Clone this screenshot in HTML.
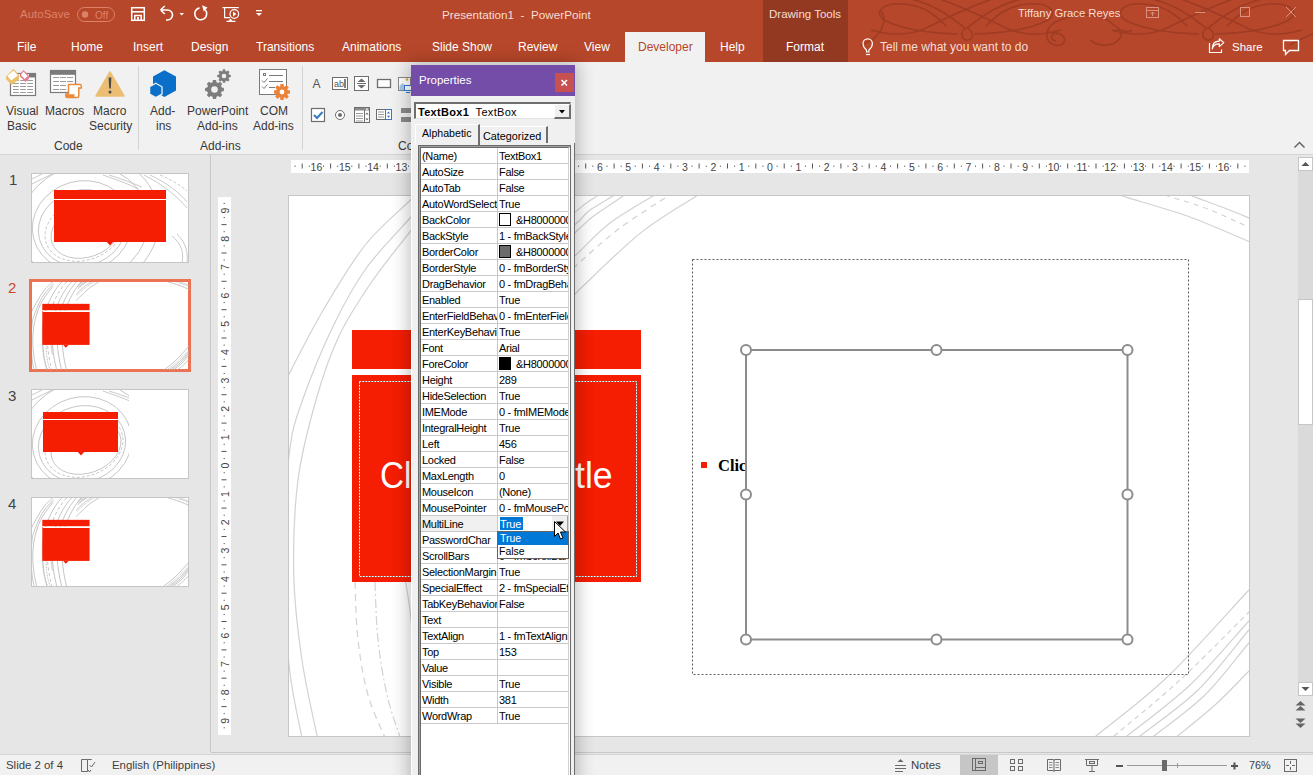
<!DOCTYPE html>
<html><head><meta charset="utf-8">
<style>
*{margin:0;padding:0;box-sizing:border-box}
html,body{width:1313px;height:775px;overflow:hidden;background:#E6E6E6;font-family:"Liberation Sans",sans-serif;position:relative}
.a{position:absolute}
.t{position:absolute;white-space:nowrap;line-height:1}
#top{left:0;top:0;width:1313px;height:62px;background:#B7472A}
#ctx{left:763px;top:0;width:85px;height:62px;background:#933922}
#devtab{left:625px;top:32px;width:80px;height:30px;background:#F1F1F1}
#ribbon{left:0;top:62px;width:1313px;height:93px;background:#F1F1F1;border-bottom:1px solid #D4D4D4}
.tab{font-size:12px;color:#FFFFFF;top:41px}
.rl{font-size:12px;color:#383838}
.sep{position:absolute;width:1px;background:#D4D4D4}
#status{left:0;top:755px;width:1313px;height:20px;background:#F1F1F1}
.st{font-size:11.4px;color:#404040;top:760px}


.pk{position:absolute;left:421px;width:76px;height:15px;overflow:hidden;font-size:11px;letter-spacing:-0.3px;color:#000;line-height:16.5px;white-space:nowrap;padding-left:1px}
.pv{position:absolute;left:498px;width:70px;height:15px;overflow:hidden;font-size:11px;letter-spacing:-0.3px;color:#000;line-height:16.5px;white-space:nowrap;padding-left:1px}
.sw{position:absolute;left:1px;top:1px;width:12px;height:13px;border:1px solid #000;display:block}
</style></head><body>
<!-- title + tabs -->
<div id="top" class="a"></div>
<div id="ctx" class="a"></div>
<div id="devtab" class="a"></div>

<!-- title bar icons -->
<svg class="a" style="left:0;top:0" width="1313" height="62">
 <g fill="none" stroke="#9E3C24" stroke-width="1.7">
  <g transform="translate(966 0)"><g id="mf">
   <path d="M1 28 C-7 30 -5 41 2 40 C8 39 8 31 1 28 C14 18 30 4 60 -2"/>
   <path d="M-1 28 C-14 18 -30 4 -60 -2"/>
   <path d="M8 34 C30 34 60 30 78 22 C95 14 85 2 62 4 C40 6 30 16 20 26"/>
   <path d="M-8 34 C-30 34 -60 30 -78 22 C-95 14 -85 2 -62 4 C-40 6 -30 16 -20 26"/>
   <path d="M-35 -4 C-10 4 20 18 40 28 C55 35 75 36 95 30"/>
   <path d="M35 -4 C10 4 -20 18 -40 28 C-55 35 -75 36 -95 30"/>
  </g></g>
  <g transform="translate(1207 0)"><g >
   <path d="M1 28 C-7 30 -5 41 2 40 C8 39 8 31 1 28 C14 18 30 4 60 -2"/>
   <path d="M-1 28 C-14 18 -30 4 -60 -2"/>
   <path d="M8 34 C30 34 60 30 78 22 C95 14 85 2 62 4 C40 6 30 16 20 26"/>
   <path d="M-8 34 C-30 34 -60 30 -78 22 C-95 14 -85 2 -62 4 C-40 6 -30 16 -20 26"/>
   <path d="M-35 -4 C-10 4 20 18 40 28 C55 35 75 36 95 30"/>
   <path d="M35 -4 C10 4 -20 18 -40 28 C-55 35 -75 36 -95 30"/>
  </g></g>
  <path d="M1060 20 C1045 25 1042 42 1055 45 C1065 47 1068 38 1060 34 C1052 30 1048 40 1056 41"/>
  <path d="M1060 20 C1080 12 1100 14 1110 22 C1118 28 1125 35 1132 30"/>
  <path d="M1090 40 C1100 48 1115 46 1120 38 C1123 32 1118 28 1114 32"/>
  <path d="M860 45 C880 40 890 20 880 10"/>
  <path d="M1290 45 C1300 38 1313 35 1320 30"/>
 </g>
 <!-- autosave toggle -->
 <rect x="77.5" y="7.5" width="37" height="14" rx="7" fill="none" stroke="#DE8169"/>
 <circle cx="85" cy="14.5" r="3.2" fill="#DE8169"/>
 <text x="95" y="19" font-family="Liberation Sans" font-size="10" fill="#DE8169">Off</text>
 <!-- save -->
 <g fill="none" stroke="#fff" stroke-width="1.5">
  <rect x="131.7" y="7.7" width="12.6" height="12.6"/>
  <path d="M134.8 20 V15.5 H141.2 V20"/>
 </g>
 <rect x="131" y="11" width="14" height="1.6" fill="#fff"/>
 <rect x="137" y="17" width="2" height="3" fill="#fff"/>
 <!-- undo -->
 <path d="M160.5 10 L164.8 6 M160.5 10 L164.8 14 M161 10 H167.5 a5 5 0 0 1 0 10 h-1.5" fill="none" stroke="#fff" stroke-width="1.6"/>
 <path d="M179.5 13 h4.5 l-2.25 2.6z" fill="#fff"/>
 <!-- repeat -->
 <path d="M205.2 9.8 A6 6 0 1 1 199.5 7.9" fill="none" stroke="#fff" stroke-width="1.6"/>
 <path d="M202 5.2 L207.5 7.4 L203.8 11.6z" fill="#fff"/>
 <!-- present -->
 <g fill="none" stroke="#fff" stroke-width="1.2">
  <line x1="222.5" y1="7.6" x2="238.8" y2="7.6"/>
  <path d="M224.6 8 V17.6 H230"/>
  <circle cx="234.3" cy="14" r="4.3"/>
  <path d="M226.5 21.4 h9 M229 21.4 l1.5 -2 l1.5 2"/>
 </g>
 <path d="M233 11.6 l3.4 2.4 l-3.4 2.4z" fill="#fff"/>
 <!-- customize -->
 <rect x="256" y="10" width="6" height="1.3" fill="#fff"/>
 <path d="M256 13 h6 l-3 3z" fill="#fff"/>
 <!-- window controls -->
 <g fill="none" stroke="#D9907D" stroke-width="1">
  <rect x="1146.5" y="7.5" width="12" height="10"/>
  <line x1="1147" y1="10.5" x2="1158" y2="10.5"/>
  <path d="M1152.5 16 v-4 M1150.5 14 l2 -2 l2 2"/>
  <line x1="1195" y1="12.5" x2="1205" y2="12.5"/>
  <rect x="1240.5" y="7.5" width="9" height="9"/>
  <path d="M1286 7 l10 10 M1296 7 l-10 10"/>
 </g>
 <!-- lightbulb -->
 <g fill="none" stroke="#fff" stroke-width="1.2">
  <path d="M866.5 52 v-2 q-3.5 -3 -3.5 -6.5 a4.7 4.7 0 0 1 9.4 0 q0 3.5 -3.5 6.5 v2z"/>
  <line x1="866" y1="54.5" x2="870" y2="54.5"/>
 </g>
 <!-- share -->
 <g fill="none" stroke="#fff" stroke-width="1.2">
  <path d="M1209.5 43 V52.5 H1221.5 V49.5"/>
  <path d="M1212.3 49 C1212.8 45 1215.5 43.8 1219.3 43.8 V46.6 L1223.8 42.6 L1219.3 38.8 V41.2 C1214.5 41.2 1212.3 44.5 1212.3 49z" stroke-linejoin="round"/>
 </g>
 <!-- comments -->
 <path d="M1283.5 40.5 h15 v10 h-9 l-4 4 v-4 h-2z" fill="none" stroke="#fff" stroke-width="1.3"/>
</svg>
<span class="t" style="left:20px;top:8.5px;font-size:11.5px;color:#DE8169">AutoSave</span>
<span class="t" style="left:442px;top:8.5px;font-size:11.7px;color:#F6DDD5">Presentation1 &nbsp;- &nbsp;PowerPoint</span>
<span class="t" style="left:769px;top:8.5px;font-size:11.5px;color:#F6DDD5">Drawing Tools</span>
<span class="t" style="left:1018px;top:7.5px;font-size:11.3px;color:#F6DDD5">Tiffany Grace Reyes</span>

<span class="t tab" style="left:17px">File</span>
<span class="t tab" style="left:71px">Home</span>
<span class="t tab" style="left:133px">Insert</span>
<span class="t tab" style="left:191px">Design</span>
<span class="t tab" style="left:256px">Transitions</span>
<span class="t tab" style="left:342px">Animations</span>
<span class="t tab" style="left:432px">Slide Show</span>
<span class="t tab" style="left:518px">Review</span>
<span class="t tab" style="left:584px">View</span>
<span class="t tab" style="left:638px;color:#B7472A">Developer</span>
<span class="t tab" style="left:720px">Help</span>
<span class="t tab" style="left:786px">Format</span>
<span class="t tab" style="left:880px;color:#F5DCD4">Tell me what you want to do</span>
<span class="t tab" style="left:1232px;font-size:11.5px;top:41.5px">Share</span>

<!-- ribbon -->
<div id="ribbon" class="a"></div>


<!-- ribbon content -->
<svg class="a" style="left:0;top:62px" width="420" height="92" viewBox="0 62 420 92">
 <!-- Visual Basic -->
 <rect x="10.5" y="73.5" width="25" height="22" fill="#fff" stroke="#7a7a7a" stroke-width="1.2"/>
 <rect x="29" y="73" width="7" height="4.5" fill="#7a7a7a"/>
 <g stroke="#9a9a9a" stroke-width="1"><line x1="13" y1="80.5" x2="18.8" y2="80.5"/><line x1="20.2" y1="80.5" x2="25.9" y2="80.5"/><line x1="27.2" y1="80.5" x2="33" y2="80.5"/><line x1="13" y1="83.5" x2="18.8" y2="83.5"/><line x1="20.2" y1="83.5" x2="25.9" y2="83.5"/><line x1="27.2" y1="83.5" x2="33" y2="83.5"/><line x1="13" y1="86.5" x2="18.8" y2="86.5"/><line x1="20.2" y1="86.5" x2="25.9" y2="86.5"/><line x1="27.2" y1="86.5" x2="33" y2="86.5"/><line x1="13" y1="89.5" x2="18.8" y2="89.5"/><line x1="20.2" y1="89.5" x2="25.9" y2="89.5"/><line x1="27.2" y1="89.5" x2="33" y2="89.5"/><line x1="13" y1="92.5" x2="18.8" y2="92.5"/><line x1="20.2" y1="92.5" x2="25.9" y2="92.5"/><line x1="27.2" y1="92.5" x2="33" y2="92.5"/></g>
 <polygon points="13.5,68.8 19,75 19,79.5 11.5,85 6,79 6,76.5" fill="#EBC06A"/>
 <polygon points="13.5,70.6 17.8,75.4 11.3,80.6 7.3,76" fill="#fff"/>
 <polygon points="23.5,70 28.8,75.5 28.8,79 25.5,82 20,76.5 20,74" fill="#E47A8E"/>
 <polygon points="23.4,71.6 27.7,76 24.6,79 20.9,75" fill="#fff"/>
 <!-- Macros -->
 <rect x="50.5" y="70.5" width="25" height="22" fill="#fff" stroke="#7a7a7a" stroke-width="1.2"/>
 <rect x="50" y="70" width="26" height="4.8" fill="#7a7a7a"/>
 <g stroke="#9a9a9a"><line x1="53" y1="77.5" x2="59" y2="77.5"/><line x1="60" y1="77.5" x2="66" y2="77.5"/><line x1="67" y1="77.5" x2="73" y2="77.5"/><line x1="53" y1="81.5" x2="59" y2="81.5"/><line x1="60" y1="81.5" x2="66" y2="81.5"/><line x1="67" y1="81.5" x2="73" y2="81.5"/><line x1="53" y1="85.5" x2="59" y2="85.5"/><line x1="60" y1="85.5" x2="66" y2="85.5"/><line x1="53" y1="89.5" x2="59" y2="89.5"/><line x1="60" y1="89.5" x2="66" y2="89.5"/></g>
 <path d="M68.5 84.5 h11.5 q1.3 0 1.3 1.5 v2 h-2.5 v8 q0 1.6 -1.6 1.6 h-9.7 q-1.6 0 -1.6 -1.6 v-2 h2.6z" fill="#fff" stroke="#EA8A3A" stroke-width="1.5"/>
 <path d="M65.5 94.3 h9 v3.3 h-7.5 q-1.5 0 -1.5 -1.6z" fill="#EA8A3A"/>
 <!-- Macro Security -->
 <path d="M110 72 L124 96 L96 96 Z" fill="#EBBE74" stroke="#EBBE74" stroke-linejoin="round" stroke-width="1.5"/>
 <path d="M108.6 77.5 h2.8 l-0.6 11 h-1.6z" fill="#4a4a4a"/>
 <circle cx="110" cy="92" r="1.5" fill="#4a4a4a"/>
 <!-- separator -->
 <line x1="138.5" y1="66" x2="138.5" y2="150" stroke="#D4D4D4"/>
 <!-- Add-ins -->
 <path d="M164.4 70.2 L176 76.5 L176 90.5 L164.4 97 L153 90.5 L153 76.5 Z" fill="#0A6FC8"/>
 <path d="M155.8 83.3 L162 86.8 L162 94 L155.8 97.5 L149.6 94 L149.6 86.8 Z" fill="#0A6FC8" stroke="#F1F1F1" stroke-width="1.3"/>
 <!-- PowerPoint Add-ins gears -->
 <g fill="#7D7D7D" transform="translate(214.5 89.5)"><circle r="7.6"/><rect x="-1.8" y="-9.4" width="3.6" height="18.8" transform="rotate(0)" rx="0.6"/><rect x="-1.8" y="-9.4" width="3.6" height="18.8" transform="rotate(45)" rx="0.6"/><rect x="-1.8" y="-9.4" width="3.6" height="18.8" transform="rotate(90)" rx="0.6"/><rect x="-1.8" y="-9.4" width="3.6" height="18.8" transform="rotate(135)" rx="0.6"/><circle r="3.3" fill="#F1F1F1"/></g>
 <g fill="#7D7D7D" transform="translate(224 76)"><circle r="5.2"/><rect x="-1.3" y="-6.8" width="2.6" height="13.6" transform="rotate(0)" rx="0.6"/><rect x="-1.3" y="-6.8" width="2.6" height="13.6" transform="rotate(45)" rx="0.6"/><rect x="-1.3" y="-6.8" width="2.6" height="13.6" transform="rotate(90)" rx="0.6"/><rect x="-1.3" y="-6.8" width="2.6" height="13.6" transform="rotate(135)" rx="0.6"/><circle r="2.3" fill="#F1F1F1"/></g>
 <!-- COM Add-ins -->
 <rect x="259.5" y="69.5" width="27" height="25" fill="#fff" stroke="#7a7a7a"/>
 <rect x="263.5" y="73.5" width="2" height="2" fill="none" stroke="#7a7a7a"/>
 <g stroke="#7a7a7a" fill="none" stroke-width="1">
  <line x1="269" y1="75.5" x2="283" y2="75.5"/><line x1="269" y1="81.5" x2="283" y2="81.5"/><line x1="269" y1="87.5" x2="275" y2="87.5"/>
  <path d="M262 80.5 l2 2 l3.5 -4"/><path d="M262 86.5 l2 2 l3.5 -4"/>
 </g>
 <g fill="#EC8236" transform="translate(282 92)"><circle r="6"/><rect x="-1.7" y="-8" width="3.4" height="16" transform="rotate(0)" rx="0.6"/><rect x="-1.7" y="-8" width="3.4" height="16" transform="rotate(45)" rx="0.6"/><rect x="-1.7" y="-8" width="3.4" height="16" transform="rotate(90)" rx="0.6"/><rect x="-1.7" y="-8" width="3.4" height="16" transform="rotate(135)" rx="0.6"/><circle r="2.4" fill="#fff"/></g>
 <line x1="302.5" y1="66" x2="302.5" y2="150" stroke="#D4D4D4"/>
 <!-- Controls row 1 -->
 <text x="312.5" y="88" font-family="Liberation Sans" font-size="12" fill="#555">A</text>
 <rect x="332.5" y="77.5" width="15" height="12" fill="#fff" stroke="#6d6d6d"/>
 <text x="334" y="87" font-family="Liberation Sans" font-size="9" fill="#555">ab</text>
 <line x1="345" y1="79" x2="345" y2="88" stroke="#000"/>
 <rect x="354.5" y="76.5" width="14" height="14" fill="#fff" stroke="#6d6d6d"/>
 <path d="M361.5 78.5 l4 3.5 h-8z M361.5 88.5 l4 -3.5 h-8z" fill="#6d6d6d"/>
 <line x1="357" y1="83.5" x2="366" y2="83.5" stroke="#6d6d6d"/>
 <rect x="377.5" y="79.5" width="13" height="8" fill="#fff" stroke="#6d6d6d" stroke-width="1.3"/>
 <rect x="398.5" y="77.5" width="12" height="13" fill="#fff" stroke="#8a8a8a"/>
 <circle cx="407" cy="79.5" r="1.3" fill="#E9A54F"/>
 <path d="M399.5 90 v-4 l3 -3 l3 3 v4z" fill="#A9C6E8"/>
 <rect x="404.5" y="85.5" width="7" height="5" fill="#fff" stroke="#2D7BD0"/>
 <path d="M406 92.5 h4" stroke="#2D7BD0"/>
 <!-- Controls row 2 -->
 <rect x="311.5" y="108.5" width="13" height="13" fill="#fff" stroke="#6d6d6d" stroke-width="1.2"/>
 <path d="M314 115 l3 3 l5.5 -6" fill="none" stroke="#3A78C2" stroke-width="2"/>
 <circle cx="340" cy="115" r="4.5" fill="#fff" stroke="#6d6d6d"/>
 <circle cx="340" cy="115" r="2" fill="#6d6d6d"/>
 <rect x="354.5" y="107.5" width="15" height="15" fill="#fff" stroke="#6d6d6d"/>
 <line x1="364.5" y1="108" x2="364.5" y2="122" stroke="#6d6d6d"/>
 <rect x="355" y="108" width="14" height="2.5" fill="#8a8a8a"/>
 <path d="M365.5 108.5 h3 l-1.5 1.8z" fill="#fff"/>
 <path d="M365.3 114.5 l1.7 -2 l1.7 2z M365.3 118.5 l1.7 2 l1.7 -2z" fill="#6d6d6d"/>
 <g stroke="#9a9a9a"><line x1="356" y1="113.5" x2="363" y2="113.5"/><line x1="356" y1="116" x2="363" y2="116"/><line x1="356" y1="118.5" x2="363" y2="118.5"/><line x1="356" y1="121" x2="363" y2="121"/></g>
 <rect x="376.5" y="109.5" width="15" height="10" fill="#fff" stroke="#6d6d6d"/>
 <g stroke="#9a9a9a"><line x1="378" y1="112" x2="384" y2="112"/><line x1="378" y1="114.5" x2="384" y2="114.5"/><line x1="378" y1="117" x2="384" y2="117"/></g>
 <rect x="385.5" y="109.5" width="6" height="10" fill="#fff" stroke="#3A78C2"/>
 <path d="M386.8 113.5 l1.7 -2 l1.7 2z M386.8 115.8 l1.7 2 l1.7 -2z" fill="#3A78C2"/>
 <rect x="401" y="108" width="10" height="5" fill="#8a8a8a"/>
 <rect x="401" y="117" width="10" height="5" fill="#8a8a8a"/>
</svg>
<span class="t rl" style="left:6px;top:105px">Visual</span>
<span class="t rl" style="left:7px;top:120px">Basic</span>
<span class="t rl" style="left:45px;top:105px">Macros</span>
<span class="t rl" style="left:93px;top:105px">Macro</span>
<span class="t rl" style="left:89px;top:120px">Security</span>
<span class="t rl" style="left:54px;top:140px">Code</span>
<span class="t rl" style="left:150px;top:105px">Add-</span>
<span class="t rl" style="left:156px;top:120px">ins</span>
<span class="t rl" style="left:187px;top:105px">PowerPoint</span>
<span class="t rl" style="left:197px;top:120px">Add-ins</span>
<span class="t rl" style="left:260px;top:105px">COM</span>
<span class="t rl" style="left:253px;top:120px">Add-ins</span>
<span class="t rl" style="left:200px;top:140px">Add-ins</span>
<span class="t rl" style="left:398px;top:140px">Co</span>


<!-- main area -->
<div class="a" style="left:210px;top:155px;width:1px;height:597px;background:#C8C8C8"></div>
<div class="a" style="left:211px;top:752px;width:1102px;height:1px;background:#C8C8C8"></div>
<div class="a" style="left:0;top:754px;width:1313px;height:1px;background:#D4D4D4"></div>
<svg class="a" style="left:291px;top:160px" width="958" height="13">
<rect width="958" height="13" fill="#fff"/>
<text x="25.4" y="10.5" text-anchor="middle" font-family="Liberation Sans" font-size="10.5" fill="#444">16</text>
<text x="53.8" y="10.5" text-anchor="middle" font-family="Liberation Sans" font-size="10.5" fill="#444">15</text>
<text x="82.1" y="10.5" text-anchor="middle" font-family="Liberation Sans" font-size="10.5" fill="#444">14</text>
<text x="110.4" y="10.5" text-anchor="middle" font-family="Liberation Sans" font-size="10.5" fill="#444">13</text>
<text x="138.8" y="10.5" text-anchor="middle" font-family="Liberation Sans" font-size="10.5" fill="#444">12</text>
<text x="167.1" y="10.5" text-anchor="middle" font-family="Liberation Sans" font-size="10.5" fill="#444">11</text>
<text x="195.5" y="10.5" text-anchor="middle" font-family="Liberation Sans" font-size="10.5" fill="#444">10</text>
<text x="223.8" y="10.5" text-anchor="middle" font-family="Liberation Sans" font-size="10.5" fill="#444">9</text>
<text x="252.2" y="10.5" text-anchor="middle" font-family="Liberation Sans" font-size="10.5" fill="#444">8</text>
<text x="280.5" y="10.5" text-anchor="middle" font-family="Liberation Sans" font-size="10.5" fill="#444">7</text>
<text x="308.9" y="10.5" text-anchor="middle" font-family="Liberation Sans" font-size="10.5" fill="#444">6</text>
<text x="337.2" y="10.5" text-anchor="middle" font-family="Liberation Sans" font-size="10.5" fill="#444">5</text>
<text x="365.6" y="10.5" text-anchor="middle" font-family="Liberation Sans" font-size="10.5" fill="#444">4</text>
<text x="393.9" y="10.5" text-anchor="middle" font-family="Liberation Sans" font-size="10.5" fill="#444">3</text>
<text x="422.3" y="10.5" text-anchor="middle" font-family="Liberation Sans" font-size="10.5" fill="#444">2</text>
<text x="450.6" y="10.5" text-anchor="middle" font-family="Liberation Sans" font-size="10.5" fill="#444">1</text>
<text x="479.0" y="10.5" text-anchor="middle" font-family="Liberation Sans" font-size="10.5" fill="#444">0</text>
<text x="507.4" y="10.5" text-anchor="middle" font-family="Liberation Sans" font-size="10.5" fill="#444">1</text>
<text x="535.7" y="10.5" text-anchor="middle" font-family="Liberation Sans" font-size="10.5" fill="#444">2</text>
<text x="564.0" y="10.5" text-anchor="middle" font-family="Liberation Sans" font-size="10.5" fill="#444">3</text>
<text x="592.4" y="10.5" text-anchor="middle" font-family="Liberation Sans" font-size="10.5" fill="#444">4</text>
<text x="620.8" y="10.5" text-anchor="middle" font-family="Liberation Sans" font-size="10.5" fill="#444">5</text>
<text x="649.1" y="10.5" text-anchor="middle" font-family="Liberation Sans" font-size="10.5" fill="#444">6</text>
<text x="677.5" y="10.5" text-anchor="middle" font-family="Liberation Sans" font-size="10.5" fill="#444">7</text>
<text x="705.8" y="10.5" text-anchor="middle" font-family="Liberation Sans" font-size="10.5" fill="#444">8</text>
<text x="734.1" y="10.5" text-anchor="middle" font-family="Liberation Sans" font-size="10.5" fill="#444">9</text>
<text x="762.5" y="10.5" text-anchor="middle" font-family="Liberation Sans" font-size="10.5" fill="#444">10</text>
<text x="790.9" y="10.5" text-anchor="middle" font-family="Liberation Sans" font-size="10.5" fill="#444">11</text>
<text x="819.2" y="10.5" text-anchor="middle" font-family="Liberation Sans" font-size="10.5" fill="#444">12</text>
<text x="847.5" y="10.5" text-anchor="middle" font-family="Liberation Sans" font-size="10.5" fill="#444">13</text>
<text x="875.9" y="10.5" text-anchor="middle" font-family="Liberation Sans" font-size="10.5" fill="#444">14</text>
<text x="904.2" y="10.5" text-anchor="middle" font-family="Liberation Sans" font-size="10.5" fill="#444">15</text>
<text x="932.6" y="10.5" text-anchor="middle" font-family="Liberation Sans" font-size="10.5" fill="#444">16</text>
<rect x="3.6" y="5.5" width="1" height="1.5" fill="#777"/>
<rect x="10.7" y="3.5" width="1" height="5" fill="#555"/>
<rect x="17.8" y="5.5" width="1" height="1.5" fill="#777"/>
<rect x="32.0" y="5.5" width="1" height="1.5" fill="#777"/>
<rect x="39.1" y="3.5" width="1" height="5" fill="#555"/>
<rect x="46.2" y="5.5" width="1" height="1.5" fill="#777"/>
<rect x="60.3" y="5.5" width="1" height="1.5" fill="#777"/>
<rect x="67.4" y="3.5" width="1" height="5" fill="#555"/>
<rect x="74.5" y="5.5" width="1" height="1.5" fill="#777"/>
<rect x="88.7" y="5.5" width="1" height="1.5" fill="#777"/>
<rect x="95.8" y="3.5" width="1" height="5" fill="#555"/>
<rect x="102.9" y="5.5" width="1" height="1.5" fill="#777"/>
<rect x="117.0" y="5.5" width="1" height="1.5" fill="#777"/>
<rect x="124.1" y="3.5" width="1" height="5" fill="#555"/>
<rect x="131.2" y="5.5" width="1" height="1.5" fill="#777"/>
<rect x="145.4" y="5.5" width="1" height="1.5" fill="#777"/>
<rect x="152.5" y="3.5" width="1" height="5" fill="#555"/>
<rect x="159.6" y="5.5" width="1" height="1.5" fill="#777"/>
<rect x="173.7" y="5.5" width="1" height="1.5" fill="#777"/>
<rect x="180.8" y="3.5" width="1" height="5" fill="#555"/>
<rect x="187.9" y="5.5" width="1" height="1.5" fill="#777"/>
<rect x="202.1" y="5.5" width="1" height="1.5" fill="#777"/>
<rect x="209.2" y="3.5" width="1" height="5" fill="#555"/>
<rect x="216.3" y="5.5" width="1" height="1.5" fill="#777"/>
<rect x="230.4" y="5.5" width="1" height="1.5" fill="#777"/>
<rect x="237.5" y="3.5" width="1" height="5" fill="#555"/>
<rect x="244.6" y="5.5" width="1" height="1.5" fill="#777"/>
<rect x="258.8" y="5.5" width="1" height="1.5" fill="#777"/>
<rect x="265.9" y="3.5" width="1" height="5" fill="#555"/>
<rect x="273.0" y="5.5" width="1" height="1.5" fill="#777"/>
<rect x="287.1" y="5.5" width="1" height="1.5" fill="#777"/>
<rect x="294.2" y="3.5" width="1" height="5" fill="#555"/>
<rect x="301.3" y="5.5" width="1" height="1.5" fill="#777"/>
<rect x="315.5" y="5.5" width="1" height="1.5" fill="#777"/>
<rect x="322.6" y="3.5" width="1" height="5" fill="#555"/>
<rect x="329.7" y="5.5" width="1" height="1.5" fill="#777"/>
<rect x="343.8" y="5.5" width="1" height="1.5" fill="#777"/>
<rect x="350.9" y="3.5" width="1" height="5" fill="#555"/>
<rect x="358.0" y="5.5" width="1" height="1.5" fill="#777"/>
<rect x="372.2" y="5.5" width="1" height="1.5" fill="#777"/>
<rect x="379.3" y="3.5" width="1" height="5" fill="#555"/>
<rect x="386.4" y="5.5" width="1" height="1.5" fill="#777"/>
<rect x="400.5" y="5.5" width="1" height="1.5" fill="#777"/>
<rect x="407.6" y="3.5" width="1" height="5" fill="#555"/>
<rect x="414.7" y="5.5" width="1" height="1.5" fill="#777"/>
<rect x="428.9" y="5.5" width="1" height="1.5" fill="#777"/>
<rect x="436.0" y="3.5" width="1" height="5" fill="#555"/>
<rect x="443.1" y="5.5" width="1" height="1.5" fill="#777"/>
<rect x="457.2" y="5.5" width="1" height="1.5" fill="#777"/>
<rect x="464.3" y="3.5" width="1" height="5" fill="#555"/>
<rect x="471.4" y="5.5" width="1" height="1.5" fill="#777"/>
<rect x="485.6" y="5.5" width="1" height="1.5" fill="#777"/>
<rect x="492.7" y="3.5" width="1" height="5" fill="#555"/>
<rect x="499.8" y="5.5" width="1" height="1.5" fill="#777"/>
<rect x="513.9" y="5.5" width="1" height="1.5" fill="#777"/>
<rect x="521.0" y="3.5" width="1" height="5" fill="#555"/>
<rect x="528.1" y="5.5" width="1" height="1.5" fill="#777"/>
<rect x="542.3" y="5.5" width="1" height="1.5" fill="#777"/>
<rect x="549.4" y="3.5" width="1" height="5" fill="#555"/>
<rect x="556.5" y="5.5" width="1" height="1.5" fill="#777"/>
<rect x="570.6" y="5.5" width="1" height="1.5" fill="#777"/>
<rect x="577.7" y="3.5" width="1" height="5" fill="#555"/>
<rect x="584.8" y="5.5" width="1" height="1.5" fill="#777"/>
<rect x="599.0" y="5.5" width="1" height="1.5" fill="#777"/>
<rect x="606.1" y="3.5" width="1" height="5" fill="#555"/>
<rect x="613.2" y="5.5" width="1" height="1.5" fill="#777"/>
<rect x="627.3" y="5.5" width="1" height="1.5" fill="#777"/>
<rect x="634.4" y="3.5" width="1" height="5" fill="#555"/>
<rect x="641.5" y="5.5" width="1" height="1.5" fill="#777"/>
<rect x="655.7" y="5.5" width="1" height="1.5" fill="#777"/>
<rect x="662.8" y="3.5" width="1" height="5" fill="#555"/>
<rect x="669.9" y="5.5" width="1" height="1.5" fill="#777"/>
<rect x="684.0" y="5.5" width="1" height="1.5" fill="#777"/>
<rect x="691.1" y="3.5" width="1" height="5" fill="#555"/>
<rect x="698.2" y="5.5" width="1" height="1.5" fill="#777"/>
<rect x="712.4" y="5.5" width="1" height="1.5" fill="#777"/>
<rect x="719.5" y="3.5" width="1" height="5" fill="#555"/>
<rect x="726.6" y="5.5" width="1" height="1.5" fill="#777"/>
<rect x="740.7" y="5.5" width="1" height="1.5" fill="#777"/>
<rect x="747.8" y="3.5" width="1" height="5" fill="#555"/>
<rect x="754.9" y="5.5" width="1" height="1.5" fill="#777"/>
<rect x="769.1" y="5.5" width="1" height="1.5" fill="#777"/>
<rect x="776.2" y="3.5" width="1" height="5" fill="#555"/>
<rect x="783.3" y="5.5" width="1" height="1.5" fill="#777"/>
<rect x="797.4" y="5.5" width="1" height="1.5" fill="#777"/>
<rect x="804.5" y="3.5" width="1" height="5" fill="#555"/>
<rect x="811.6" y="5.5" width="1" height="1.5" fill="#777"/>
<rect x="825.8" y="5.5" width="1" height="1.5" fill="#777"/>
<rect x="832.9" y="3.5" width="1" height="5" fill="#555"/>
<rect x="840.0" y="5.5" width="1" height="1.5" fill="#777"/>
<rect x="854.1" y="5.5" width="1" height="1.5" fill="#777"/>
<rect x="861.2" y="3.5" width="1" height="5" fill="#555"/>
<rect x="868.3" y="5.5" width="1" height="1.5" fill="#777"/>
<rect x="882.5" y="5.5" width="1" height="1.5" fill="#777"/>
<rect x="889.6" y="3.5" width="1" height="5" fill="#555"/>
<rect x="896.7" y="5.5" width="1" height="1.5" fill="#777"/>
<rect x="910.8" y="5.5" width="1" height="1.5" fill="#777"/>
<rect x="917.9" y="3.5" width="1" height="5" fill="#555"/>
<rect x="925.0" y="5.5" width="1" height="1.5" fill="#777"/>
<rect x="939.2" y="5.5" width="1" height="1.5" fill="#777"/>
<rect x="946.3" y="3.5" width="1" height="5" fill="#555"/>
<rect x="953.4" y="5.5" width="1" height="1.5" fill="#777"/>
</svg>
<svg class="a" style="left:218px;top:197px" width="13" height="538">
<rect width="13" height="538" fill="#fff"/>
<text transform="translate(10.5 13.5) rotate(-90)" text-anchor="middle" font-family="Liberation Sans" font-size="10.5" fill="#444">9</text>
<text transform="translate(10.5 41.8) rotate(-90)" text-anchor="middle" font-family="Liberation Sans" font-size="10.5" fill="#444">8</text>
<text transform="translate(10.5 70.2) rotate(-90)" text-anchor="middle" font-family="Liberation Sans" font-size="10.5" fill="#444">7</text>
<text transform="translate(10.5 98.5) rotate(-90)" text-anchor="middle" font-family="Liberation Sans" font-size="10.5" fill="#444">6</text>
<text transform="translate(10.5 126.9) rotate(-90)" text-anchor="middle" font-family="Liberation Sans" font-size="10.5" fill="#444">5</text>
<text transform="translate(10.5 155.2) rotate(-90)" text-anchor="middle" font-family="Liberation Sans" font-size="10.5" fill="#444">4</text>
<text transform="translate(10.5 183.6) rotate(-90)" text-anchor="middle" font-family="Liberation Sans" font-size="10.5" fill="#444">3</text>
<text transform="translate(10.5 211.9) rotate(-90)" text-anchor="middle" font-family="Liberation Sans" font-size="10.5" fill="#444">2</text>
<text transform="translate(10.5 240.3) rotate(-90)" text-anchor="middle" font-family="Liberation Sans" font-size="10.5" fill="#444">1</text>
<text transform="translate(10.5 268.6) rotate(-90)" text-anchor="middle" font-family="Liberation Sans" font-size="10.5" fill="#444">0</text>
<text transform="translate(10.5 297.0) rotate(-90)" text-anchor="middle" font-family="Liberation Sans" font-size="10.5" fill="#444">1</text>
<text transform="translate(10.5 325.3) rotate(-90)" text-anchor="middle" font-family="Liberation Sans" font-size="10.5" fill="#444">2</text>
<text transform="translate(10.5 353.7) rotate(-90)" text-anchor="middle" font-family="Liberation Sans" font-size="10.5" fill="#444">3</text>
<text transform="translate(10.5 382.0) rotate(-90)" text-anchor="middle" font-family="Liberation Sans" font-size="10.5" fill="#444">4</text>
<text transform="translate(10.5 410.4) rotate(-90)" text-anchor="middle" font-family="Liberation Sans" font-size="10.5" fill="#444">5</text>
<text transform="translate(10.5 438.7) rotate(-90)" text-anchor="middle" font-family="Liberation Sans" font-size="10.5" fill="#444">6</text>
<text transform="translate(10.5 467.1) rotate(-90)" text-anchor="middle" font-family="Liberation Sans" font-size="10.5" fill="#444">7</text>
<text transform="translate(10.5 495.4) rotate(-90)" text-anchor="middle" font-family="Liberation Sans" font-size="10.5" fill="#444">8</text>
<text transform="translate(10.5 523.8) rotate(-90)" text-anchor="middle" font-family="Liberation Sans" font-size="10.5" fill="#444">9</text>
<rect x="5.5" y="5.9" width="1.5" height="1" fill="#777"/>
<rect x="5.5" y="20.0" width="1.5" height="1" fill="#777"/>
<rect x="3.5" y="27.1" width="5" height="1" fill="#555"/>
<rect x="5.5" y="34.2" width="1.5" height="1" fill="#777"/>
<rect x="5.5" y="48.4" width="1.5" height="1" fill="#777"/>
<rect x="3.5" y="55.5" width="5" height="1" fill="#555"/>
<rect x="5.5" y="62.6" width="1.5" height="1" fill="#777"/>
<rect x="5.5" y="76.7" width="1.5" height="1" fill="#777"/>
<rect x="3.5" y="83.8" width="5" height="1" fill="#555"/>
<rect x="5.5" y="90.9" width="1.5" height="1" fill="#777"/>
<rect x="5.5" y="105.1" width="1.5" height="1" fill="#777"/>
<rect x="3.5" y="112.2" width="5" height="1" fill="#555"/>
<rect x="5.5" y="119.3" width="1.5" height="1" fill="#777"/>
<rect x="5.5" y="133.4" width="1.5" height="1" fill="#777"/>
<rect x="3.5" y="140.5" width="5" height="1" fill="#555"/>
<rect x="5.5" y="147.6" width="1.5" height="1" fill="#777"/>
<rect x="5.5" y="161.8" width="1.5" height="1" fill="#777"/>
<rect x="3.5" y="168.9" width="5" height="1" fill="#555"/>
<rect x="5.5" y="176.0" width="1.5" height="1" fill="#777"/>
<rect x="5.5" y="190.1" width="1.5" height="1" fill="#777"/>
<rect x="3.5" y="197.2" width="5" height="1" fill="#555"/>
<rect x="5.5" y="204.3" width="1.5" height="1" fill="#777"/>
<rect x="5.5" y="218.5" width="1.5" height="1" fill="#777"/>
<rect x="3.5" y="225.6" width="5" height="1" fill="#555"/>
<rect x="5.5" y="232.7" width="1.5" height="1" fill="#777"/>
<rect x="5.5" y="246.8" width="1.5" height="1" fill="#777"/>
<rect x="3.5" y="253.9" width="5" height="1" fill="#555"/>
<rect x="5.5" y="261.0" width="1.5" height="1" fill="#777"/>
<rect x="5.5" y="275.2" width="1.5" height="1" fill="#777"/>
<rect x="3.5" y="282.3" width="5" height="1" fill="#555"/>
<rect x="5.5" y="289.4" width="1.5" height="1" fill="#777"/>
<rect x="5.5" y="303.5" width="1.5" height="1" fill="#777"/>
<rect x="3.5" y="310.6" width="5" height="1" fill="#555"/>
<rect x="5.5" y="317.7" width="1.5" height="1" fill="#777"/>
<rect x="5.5" y="331.9" width="1.5" height="1" fill="#777"/>
<rect x="3.5" y="339.0" width="5" height="1" fill="#555"/>
<rect x="5.5" y="346.1" width="1.5" height="1" fill="#777"/>
<rect x="5.5" y="360.2" width="1.5" height="1" fill="#777"/>
<rect x="3.5" y="367.3" width="5" height="1" fill="#555"/>
<rect x="5.5" y="374.4" width="1.5" height="1" fill="#777"/>
<rect x="5.5" y="388.6" width="1.5" height="1" fill="#777"/>
<rect x="3.5" y="395.7" width="5" height="1" fill="#555"/>
<rect x="5.5" y="402.8" width="1.5" height="1" fill="#777"/>
<rect x="5.5" y="416.9" width="1.5" height="1" fill="#777"/>
<rect x="3.5" y="424.0" width="5" height="1" fill="#555"/>
<rect x="5.5" y="431.1" width="1.5" height="1" fill="#777"/>
<rect x="5.5" y="445.3" width="1.5" height="1" fill="#777"/>
<rect x="3.5" y="452.4" width="5" height="1" fill="#555"/>
<rect x="5.5" y="459.5" width="1.5" height="1" fill="#777"/>
<rect x="5.5" y="473.6" width="1.5" height="1" fill="#777"/>
<rect x="3.5" y="480.7" width="5" height="1" fill="#555"/>
<rect x="5.5" y="487.8" width="1.5" height="1" fill="#777"/>
<rect x="5.5" y="502.0" width="1.5" height="1" fill="#777"/>
<rect x="3.5" y="509.1" width="5" height="1" fill="#555"/>
<rect x="5.5" y="516.2" width="1.5" height="1" fill="#777"/>
<rect x="5.5" y="530.3" width="1.5" height="1" fill="#777"/>
</svg>
<!-- slide -->
<div class="a" id="slide" style="left:288px;top:195px;width:962px;height:542px;background:#fff;border:1px solid #C6C6C6;overflow:hidden"></div>
<!-- scrollbar -->
<div class="a" style="left:1298px;top:171px;width:15px;height:511px;background:#DADADA"></div>
<div class="a" style="left:1298px;top:157px;width:15px;height:14px;background:#fff;border:1px solid #C6C6C6"></div>
<svg class="a" style="left:1298px;top:157px" width="15" height="14"><path d="M3.5 9 L7.5 5 L11.5 9z" fill="#555"/></svg>
<div class="a" style="left:1298px;top:299px;width:15px;height:126px;background:#fff;border:1px solid #C6C6C6"></div>
<div class="a" style="left:1298px;top:682px;width:15px;height:14px;background:#fff;border:1px solid #C6C6C6"></div>
<svg class="a" style="left:1298px;top:682px" width="15" height="14"><path d="M3.5 5 L7.5 9 L11.5 5z" fill="#555"/></svg>
<svg class="a" style="left:1290px;top:698px" width="23" height="34">
 <path d="M5.5 7.5 L10.5 3 L15.5 7.5z M5.5 12.5 L10.5 8 L15.5 12.5z" fill="#666"/>
 <path d="M5.5 20.5 L10.5 25 L15.5 20.5z M5.5 25.5 L10.5 30 L15.5 25.5z" fill="#666"/>
</svg>
<svg class="a" style="left:1292px;top:140px" width="16" height="10"><path d="M2.5 7.5 L7.5 2.5 L12.5 7.5" fill="none" stroke="#666" stroke-width="1.5"/></svg>

<!-- slide content -->
<svg class="a" style="left:289px;top:196px" width="960" height="540" viewBox="289 196 960 540">
 <defs><clipPath id="sc"><rect x="289" y="196" width="960" height="540"/></clipPath></defs>
 <g clip-path="url(#sc)" fill="none" stroke="#D2D2D2" stroke-width="1.2">
  <!-- arcs -->
  <path d="M420.0 188.0 C418.5 189.9 420.0 190.2 411.0 199.5 C402.0 208.8 380.2 226.2 366.0 244.0 C351.8 261.8 338.2 284.8 325.6 306.0 C313.0 327.2 297.7 357.1 290.4 371.4 C283.1 385.7 283.4 388.6 282.0 392.0"/>
  <path d="M420.0 205.0 C418.5 207.0 420.0 206.4 411.0 217.0 C402.0 227.6 378.9 250.5 366.0 268.5 C353.1 286.5 344.3 303.1 333.7 325.0 C323.1 346.9 310.0 378.7 302.6 400.0 C295.2 421.3 292.7 425.9 289.4 452.6 C286.1 479.3 283.0 524.1 283.0 560.0 C283.0 595.9 286.1 637.7 289.4 667.7 C292.6 697.7 299.9 726.3 302.5 740.0 C305.1 753.7 304.6 748.3 305.0 750.0"/>
  <path d="M420.0 219.0 C418.5 220.9 419.1 220.1 411.0 230.6 C402.9 241.1 383.6 264.4 371.6 282.0 C359.6 299.6 348.3 316.3 339.0 336.0 C329.7 355.7 322.8 376.0 316.0 400.0 C309.2 424.0 301.7 450.8 298.0 480.0 C294.3 509.2 293.1 545.5 293.8 575.5 C294.5 605.5 298.0 632.6 302.0 660.0 C306.0 687.4 315.3 726.7 318.0 740.0"/>
  <path d="M355.0 582.0 C355.5 591.7 355.8 621.2 358.0 640.0 C360.2 658.8 363.3 678.3 368.0 695.0 C372.7 711.7 383.0 732.5 386.0 740.0" stroke-dasharray="7 5"/>
  <path d="M375.0 582.0 C375.5 591.7 376.0 621.2 378.0 640.0 C380.0 658.8 383.2 678.3 387.0 695.0 C390.8 711.7 398.7 732.5 401.0 740.0" stroke-dasharray="9 3 2 3"/>
  <path d="M405.7 582.0 C406.4 586.7 408.8 600.3 410.0 610.0 C411.2 619.7 412.5 635.0 413.0 640.0"/>
  <path d="M700.0 194.0 C699.4 194.3 706.3 189.6 696.5 196.0 C686.7 202.4 660.4 217.1 641.0 232.6 C621.6 248.1 593.5 276.1 580.0 289.0 C566.5 301.9 563.3 306.5 560.0 310.0"/>
  <path d="M672.0 194.0 C671.3 194.3 676.7 190.3 668.0 196.0 C659.3 201.7 634.7 217.0 620.0 228.0 C605.3 239.0 590.0 253.0 580.0 262.0 C570.0 271.0 563.3 278.7 560.0 282.0" stroke-dasharray="6 5"/>
  <path d="M657.0 194.0 C656.3 194.3 660.8 191.2 653.0 196.0 C645.2 200.8 622.2 213.8 610.0 223.0 C597.8 232.2 588.3 243.2 580.0 251.0 C571.7 258.8 563.3 266.8 560.0 270.0"/>
  <path d="M626.0 194.0 C625.5 194.3 628.2 192.5 623.0 196.0 C617.8 199.5 602.2 209.7 595.0 215.0 C587.8 220.3 584.2 224.2 580.0 228.0 C575.8 231.8 571.7 236.3 570.0 238.0"/>
  <path d="M616.0 194.0 C615.5 194.3 617.3 193.3 613.0 196.0 C608.7 198.7 595.5 206.0 590.0 210.0 C584.5 214.0 583.3 216.8 580.0 220.0 C576.7 223.2 571.7 227.5 570.0 229.0"/>
  <path d="M600.0 194.0 C599.5 194.3 599.5 194.3 597.0 196.0 C594.5 197.7 587.8 202.0 585.0 204.0 C582.2 206.0 582.5 206.0 580.0 208.0 C577.5 210.0 571.7 214.7 570.0 216.0"/>
  <path d="M1120.0 195.0 C1121.2 195.4 1115.6 193.8 1126.9 197.4 C1138.2 201.0 1167.9 209.0 1188.0 216.3 C1208.1 223.6 1236.4 236.2 1247.6 241.0 C1258.8 245.8 1253.8 244.3 1255.0 245.0"/>
  <path d="M1165.0 195.0 C1166.2 195.4 1165.2 195.1 1172.3 197.4 C1179.4 199.7 1195.2 204.1 1207.8 209.0 C1220.3 213.9 1239.7 223.1 1247.6 226.6 C1255.5 230.1 1253.8 229.4 1255.0 230.0" stroke-dasharray="5 5"/>
  <path d="M1190.0 195.0 C1191.0 195.4 1190.5 195.4 1195.8 197.4 C1201.1 199.4 1213.4 203.7 1222.0 207.0 C1230.6 210.3 1242.1 215.1 1247.6 217.4 C1253.1 219.7 1253.8 220.4 1255.0 221.0"/>
  <path d="M1255.0 584.0 C1253.8 585.2 1262.4 575.7 1248.0 591.0 C1233.6 606.3 1193.7 651.8 1168.4 676.0 C1143.1 700.2 1109.4 725.0 1096.0 736.0 C1082.6 747.0 1089.3 741.0 1088.0 742.0"/>
  <path d="M1255.0 606.0 C1253.8 607.2 1260.5 600.7 1248.0 613.0 C1235.5 625.3 1202.3 659.5 1180.0 680.0 C1157.7 700.5 1126.3 725.7 1114.0 736.0 C1101.7 746.3 1107.3 741.0 1106.0 742.0" stroke-dasharray="5 4"/>
  <path d="M1255.0 615.0 C1253.8 616.2 1258.8 610.3 1248.0 622.0 C1237.2 633.7 1210.2 666.0 1190.0 685.0 C1169.8 704.0 1138.8 726.5 1127.0 736.0 C1115.2 745.5 1120.3 741.0 1119.0 742.0"/>
  <path d="M1255.0 624.0 C1253.8 625.2 1257.5 620.0 1248.0 631.0 C1238.5 642.0 1216.0 672.5 1198.0 690.0 C1180.0 707.5 1151.0 727.3 1140.0 736.0 C1129.0 744.7 1133.3 741.0 1132.0 742.0"/>
  <path d="M1255.0 637.0 C1253.8 638.2 1256.3 634.3 1248.0 644.0 C1239.7 653.7 1220.7 679.7 1205.0 695.0 C1189.3 710.3 1163.8 728.2 1154.0 736.0 C1144.2 743.8 1147.3 741.0 1146.0 742.0"/>
  <path d="M1255.0 665.0 C1253.8 666.2 1254.7 665.3 1248.0 672.0 C1241.3 678.7 1226.8 694.3 1215.0 705.0 C1203.2 715.7 1185.0 729.8 1177.5 736.0 C1170.0 742.2 1171.2 741.0 1170.0 742.0"/>

 </g>
 <!-- title box -->
 <rect x="352" y="330" width="289" height="39" fill="#F51D02"/>
 <rect x="352" y="375" width="289" height="207" fill="#F51D02"/>
 <rect x="359.5" y="381.5" width="277" height="195" fill="none" stroke="#7A7A7A" stroke-width="1"/>
 <rect x="359.5" y="381.5" width="277" height="195" fill="none" stroke="#fff" stroke-width="1" stroke-dasharray="1.5 1.5"/>
 <!-- content placeholder -->
 <rect x="692.5" y="259.5" width="496" height="415" fill="none" stroke="#5A5A5A" stroke-width="1" stroke-dasharray="2 2"/>
 <rect x="701" y="462" width="6" height="6" fill="#F51D02"/>
</svg>
<span class="t" style="left:380.3px;top:458px;font-size:36px;color:#fff;transform:scaleX(0.925);transform-origin:0 0">Click to</span>
<span class="t" style="left:574.5px;top:458px;font-size:36px;color:#fff;transform:scaleX(0.99);transform-origin:0 0">tle</span>
<span class="t" style="left:718px;top:458px;font-size:16.5px;color:#000;font-family:'Liberation Serif',serif;font-weight:bold">Click to add text</span>
<!-- selected textbox -->
<svg class="a" style="left:735px;top:339px" width="404" height="312" viewBox="735 339 404 312">
 <rect x="746" y="350" width="381.5" height="289.5" fill="#fff" stroke="#8C8C8C" stroke-width="2"/>
 <g fill="#fff" stroke="#8C8C8C" stroke-width="2">
  <circle cx="746" cy="350" r="5"/><circle cx="936.5" cy="350" r="5"/><circle cx="1127.5" cy="350" r="5"/>
  <circle cx="746" cy="494.5" r="5"/><circle cx="1127.5" cy="494.5" r="5"/>
  <circle cx="746" cy="639.5" r="5"/><circle cx="936.5" cy="639.5" r="5"/><circle cx="1127.5" cy="639.5" r="5"/>
 </g>
</svg>

<!-- slide panel -->
<span class="t" style="left:9px;top:172px;font-size:15px;color:#444">1</span>
<span class="t" style="left:8px;top:280px;font-size:15px;color:#C8462A">2</span>
<span class="t" style="left:8px;top:388px;font-size:15px;color:#444">3</span>
<span class="t" style="left:8px;top:496px;font-size:15px;color:#444">4</span>
<div class="a" style="left:31px;top:173px;width:158px;height:90px;background:#fff;border:1px solid #C6C6C6"></div>
<div class="a" style="left:29px;top:279px;width:162px;height:93px;background:#fff;border:3px solid #EB7353"></div>
<div class="a" style="left:31px;top:389px;width:158px;height:90px;background:#fff;border:1px solid #C6C6C6"></div>
<div class="a" style="left:31px;top:497px;width:158px;height:90px;background:#fff;border:1px solid #C6C6C6"></div>



<!-- thumbs -->
<svg class="a" style="left:32px;top:174px" width="157" height="89">
 <defs><clipPath id="c174"><rect x="0" y="0" width="157" height="89"/></clipPath></defs>
 <g fill="none" stroke="#BDBDBD" stroke-width="0.8" clip-path="url(#c174)">
  <ellipse cx="50" cy="52" rx="50" ry="45" transform="rotate(-15 50 52)"/>
  <ellipse cx="50" cy="54" rx="44" ry="38" transform="rotate(-15 50 54)"/>
  <ellipse cx="52" cy="56" rx="40" ry="30" transform="rotate(-20 52 56)" stroke-dasharray="3 2"/>
  <ellipse cx="54" cy="57" rx="36" ry="26" transform="rotate(-20 54 57)"/>
  <ellipse cx="52" cy="50" rx="65" ry="58" transform="rotate(-15 52 50)"/>
  <ellipse cx="48" cy="50" rx="80" ry="70" transform="rotate(-15 48 50)"/>
  <path d="M71 1 C85 6 97 10 106 15"/><path d="M77 1 C90 5 100 9 110 13"/>
  <path d="M112 1 C130 10 145 22 155 34"/><path d="M118 1 C135 9 148 19 155 28"/>
  <path d="M128 1 C140 6 148 11 155 17" stroke-dasharray="3 2"/>
  <path d="M140 62 C150 70 152 80 150 89"/><path d="M145 60 C155 70 156 80 155 89"/>
  <path d="M0 10 L20 0"/><path d="M0 5 L10 0"/>
 </g>
</svg>
<div class="a" style="left:54px;top:190px;width:112px;height:52px;background:#F51D02"></div>
<div class="a" style="left:54px;top:199px;width:112px;height:1px;background:#fff"></div>
<svg class="a" style="left:106px;top:241px" width="8" height="5"><path d="M0 0 L4 4.5 L8 0z" fill="#F51D02"/></svg>
<svg class="a" style="left:32px;top:282px" width="157" height="88" viewBox="289 196 960 540" preserveAspectRatio="none">
 <g fill="none" stroke="#B8B8B8" stroke-width="5">
  <path d="M420.0 188.0 C418.5 189.9 420.0 190.2 411.0 199.5 C402.0 208.8 380.2 226.2 366.0 244.0 C351.8 261.8 338.2 284.8 325.6 306.0 C313.0 327.2 297.7 357.1 290.4 371.4 C283.1 385.7 283.4 388.6 282.0 392.0"/>
  <path d="M420.0 205.0 C418.5 207.0 420.0 206.4 411.0 217.0 C402.0 227.6 378.9 250.5 366.0 268.5 C353.1 286.5 344.3 303.1 333.7 325.0 C323.1 346.9 310.0 378.7 302.6 400.0 C295.2 421.3 292.7 425.9 289.4 452.6 C286.1 479.3 283.0 524.1 283.0 560.0 C283.0 595.9 286.1 637.7 289.4 667.7 C292.6 697.7 299.9 726.3 302.5 740.0 C305.1 753.7 304.6 748.3 305.0 750.0"/>
  <path d="M420.0 219.0 C418.5 220.9 419.1 220.1 411.0 230.6 C402.9 241.1 383.6 264.4 371.6 282.0 C359.6 299.6 348.3 316.3 339.0 336.0 C329.7 355.7 322.8 376.0 316.0 400.0 C309.2 424.0 301.7 450.8 298.0 480.0 C294.3 509.2 293.1 545.5 293.8 575.5 C294.5 605.5 298.0 632.6 302.0 660.0 C306.0 687.4 315.3 726.7 318.0 740.0"/>
  <path d="M355.0 582.0 C355.5 591.7 355.8 621.2 358.0 640.0 C360.2 658.8 363.3 678.3 368.0 695.0 C372.7 711.7 383.0 732.5 386.0 740.0" stroke-dasharray="7 5"/>
  <path d="M375.0 582.0 C375.5 591.7 376.0 621.2 378.0 640.0 C380.0 658.8 383.2 678.3 387.0 695.0 C390.8 711.7 398.7 732.5 401.0 740.0" stroke-dasharray="9 3 2 3"/>
  <path d="M405.7 582.0 C406.4 586.7 408.8 600.3 410.0 610.0 C411.2 619.7 412.5 635.0 413.0 640.0"/>
  <path d="M700.0 194.0 C699.4 194.3 706.3 189.6 696.5 196.0 C686.7 202.4 660.4 217.1 641.0 232.6 C621.6 248.1 593.5 276.1 580.0 289.0 C566.5 301.9 563.3 306.5 560.0 310.0"/>
  <path d="M672.0 194.0 C671.3 194.3 676.7 190.3 668.0 196.0 C659.3 201.7 634.7 217.0 620.0 228.0 C605.3 239.0 590.0 253.0 580.0 262.0 C570.0 271.0 563.3 278.7 560.0 282.0" stroke-dasharray="6 5"/>
  <path d="M657.0 194.0 C656.3 194.3 660.8 191.2 653.0 196.0 C645.2 200.8 622.2 213.8 610.0 223.0 C597.8 232.2 588.3 243.2 580.0 251.0 C571.7 258.8 563.3 266.8 560.0 270.0"/>
  <path d="M626.0 194.0 C625.5 194.3 628.2 192.5 623.0 196.0 C617.8 199.5 602.2 209.7 595.0 215.0 C587.8 220.3 584.2 224.2 580.0 228.0 C575.8 231.8 571.7 236.3 570.0 238.0"/>
  <path d="M616.0 194.0 C615.5 194.3 617.3 193.3 613.0 196.0 C608.7 198.7 595.5 206.0 590.0 210.0 C584.5 214.0 583.3 216.8 580.0 220.0 C576.7 223.2 571.7 227.5 570.0 229.0"/>
  <path d="M600.0 194.0 C599.5 194.3 599.5 194.3 597.0 196.0 C594.5 197.7 587.8 202.0 585.0 204.0 C582.2 206.0 582.5 206.0 580.0 208.0 C577.5 210.0 571.7 214.7 570.0 216.0"/>
  <path d="M1120.0 195.0 C1121.2 195.4 1115.6 193.8 1126.9 197.4 C1138.2 201.0 1167.9 209.0 1188.0 216.3 C1208.1 223.6 1236.4 236.2 1247.6 241.0 C1258.8 245.8 1253.8 244.3 1255.0 245.0"/>
  <path d="M1165.0 195.0 C1166.2 195.4 1165.2 195.1 1172.3 197.4 C1179.4 199.7 1195.2 204.1 1207.8 209.0 C1220.3 213.9 1239.7 223.1 1247.6 226.6 C1255.5 230.1 1253.8 229.4 1255.0 230.0" stroke-dasharray="5 5"/>
  <path d="M1190.0 195.0 C1191.0 195.4 1190.5 195.4 1195.8 197.4 C1201.1 199.4 1213.4 203.7 1222.0 207.0 C1230.6 210.3 1242.1 215.1 1247.6 217.4 C1253.1 219.7 1253.8 220.4 1255.0 221.0"/>
  <path d="M1255.0 584.0 C1253.8 585.2 1262.4 575.7 1248.0 591.0 C1233.6 606.3 1193.7 651.8 1168.4 676.0 C1143.1 700.2 1109.4 725.0 1096.0 736.0 C1082.6 747.0 1089.3 741.0 1088.0 742.0"/>
  <path d="M1255.0 606.0 C1253.8 607.2 1260.5 600.7 1248.0 613.0 C1235.5 625.3 1202.3 659.5 1180.0 680.0 C1157.7 700.5 1126.3 725.7 1114.0 736.0 C1101.7 746.3 1107.3 741.0 1106.0 742.0" stroke-dasharray="5 4"/>
  <path d="M1255.0 615.0 C1253.8 616.2 1258.8 610.3 1248.0 622.0 C1237.2 633.7 1210.2 666.0 1190.0 685.0 C1169.8 704.0 1138.8 726.5 1127.0 736.0 C1115.2 745.5 1120.3 741.0 1119.0 742.0"/>
  <path d="M1255.0 624.0 C1253.8 625.2 1257.5 620.0 1248.0 631.0 C1238.5 642.0 1216.0 672.5 1198.0 690.0 C1180.0 707.5 1151.0 727.3 1140.0 736.0 C1129.0 744.7 1133.3 741.0 1132.0 742.0"/>
  <path d="M1255.0 637.0 C1253.8 638.2 1256.3 634.3 1248.0 644.0 C1239.7 653.7 1220.7 679.7 1205.0 695.0 C1189.3 710.3 1163.8 728.2 1154.0 736.0 C1144.2 743.8 1147.3 741.0 1146.0 742.0"/>
  <path d="M1255.0 665.0 C1253.8 666.2 1254.7 665.3 1248.0 672.0 C1241.3 678.7 1226.8 694.3 1215.0 705.0 C1203.2 715.7 1185.0 729.8 1177.5 736.0 C1170.0 742.2 1171.2 741.0 1170.0 742.0"/>

  <path d="M470 196 C420 250 380 330 360 420 C345 500 350 620 380 736"/>
  <path d="M500 196 C450 250 410 330 390 420 C375 500 380 620 410 736" stroke-dasharray="20 15"/>
  <path d="M530 196 C480 250 440 330 420 420 C405 500 410 620 440 736"/>
  <path d="M560 196 C510 250 470 330 450 420 C435 500 440 620 470 736"/>
  <path d="M590 196 C540 250 500 330 480 420 C465 500 470 620 500 736"/>
 </g>
 <rect x="352" y="330" width="289" height="39" fill="#F51D02"/>
 <rect x="352" y="375" width="289" height="207" fill="#F51D02"/>
 <path d="M480 582 L496 600 L512 582z" fill="#F51D02"/>
</svg>
<div class="a" style="left:43px;top:311px;width:47px;height:1px;background:#fff"></div>
<svg class="a" style="left:32px;top:390px" width="157" height="89">
 <defs><clipPath id="c390"><rect x="0" y="0" width="97" height="89"/></clipPath></defs>
 <g fill="none" stroke="#BDBDBD" stroke-width="0.8" clip-path="url(#c390)">
  <ellipse cx="50" cy="52" rx="50" ry="45" transform="rotate(-15 50 52)"/>
  <ellipse cx="50" cy="54" rx="44" ry="38" transform="rotate(-15 50 54)"/>
  <ellipse cx="52" cy="56" rx="40" ry="30" transform="rotate(-20 52 56)" stroke-dasharray="3 2"/>
  <ellipse cx="54" cy="57" rx="36" ry="26" transform="rotate(-20 54 57)"/>
  <ellipse cx="52" cy="50" rx="65" ry="58" transform="rotate(-15 52 50)"/>
  <ellipse cx="48" cy="50" rx="80" ry="70" transform="rotate(-15 48 50)"/>
  <path d="M71 1 C85 6 97 10 106 15"/><path d="M77 1 C90 5 100 9 110 13"/>
  <path d="M112 1 C130 10 145 22 155 34"/><path d="M118 1 C135 9 148 19 155 28"/>
  <path d="M128 1 C140 6 148 11 155 17" stroke-dasharray="3 2"/>
  <path d="M140 62 C150 70 152 80 150 89"/><path d="M145 60 C155 70 156 80 155 89"/>
  <path d="M0 10 L20 0"/><path d="M0 5 L10 0"/>
 </g>
</svg>
<div class="a" style="left:43px;top:412px;width:75px;height:40px;background:#F51D02"></div>
<div class="a" style="left:43px;top:419px;width:75px;height:1px;background:#fff"></div>
<svg class="a" style="left:77px;top:451px" width="8" height="5"><path d="M0 0 L4 4.5 L8 0z" fill="#F51D02"/></svg>
<svg class="a" style="left:32px;top:498px" width="157" height="88" viewBox="289 196 960 540" preserveAspectRatio="none">
 <g fill="none" stroke="#B8B8B8" stroke-width="5">
  <path d="M420.0 188.0 C418.5 189.9 420.0 190.2 411.0 199.5 C402.0 208.8 380.2 226.2 366.0 244.0 C351.8 261.8 338.2 284.8 325.6 306.0 C313.0 327.2 297.7 357.1 290.4 371.4 C283.1 385.7 283.4 388.6 282.0 392.0"/>
  <path d="M420.0 205.0 C418.5 207.0 420.0 206.4 411.0 217.0 C402.0 227.6 378.9 250.5 366.0 268.5 C353.1 286.5 344.3 303.1 333.7 325.0 C323.1 346.9 310.0 378.7 302.6 400.0 C295.2 421.3 292.7 425.9 289.4 452.6 C286.1 479.3 283.0 524.1 283.0 560.0 C283.0 595.9 286.1 637.7 289.4 667.7 C292.6 697.7 299.9 726.3 302.5 740.0 C305.1 753.7 304.6 748.3 305.0 750.0"/>
  <path d="M420.0 219.0 C418.5 220.9 419.1 220.1 411.0 230.6 C402.9 241.1 383.6 264.4 371.6 282.0 C359.6 299.6 348.3 316.3 339.0 336.0 C329.7 355.7 322.8 376.0 316.0 400.0 C309.2 424.0 301.7 450.8 298.0 480.0 C294.3 509.2 293.1 545.5 293.8 575.5 C294.5 605.5 298.0 632.6 302.0 660.0 C306.0 687.4 315.3 726.7 318.0 740.0"/>
  <path d="M355.0 582.0 C355.5 591.7 355.8 621.2 358.0 640.0 C360.2 658.8 363.3 678.3 368.0 695.0 C372.7 711.7 383.0 732.5 386.0 740.0" stroke-dasharray="7 5"/>
  <path d="M375.0 582.0 C375.5 591.7 376.0 621.2 378.0 640.0 C380.0 658.8 383.2 678.3 387.0 695.0 C390.8 711.7 398.7 732.5 401.0 740.0" stroke-dasharray="9 3 2 3"/>
  <path d="M405.7 582.0 C406.4 586.7 408.8 600.3 410.0 610.0 C411.2 619.7 412.5 635.0 413.0 640.0"/>
  <path d="M700.0 194.0 C699.4 194.3 706.3 189.6 696.5 196.0 C686.7 202.4 660.4 217.1 641.0 232.6 C621.6 248.1 593.5 276.1 580.0 289.0 C566.5 301.9 563.3 306.5 560.0 310.0"/>
  <path d="M672.0 194.0 C671.3 194.3 676.7 190.3 668.0 196.0 C659.3 201.7 634.7 217.0 620.0 228.0 C605.3 239.0 590.0 253.0 580.0 262.0 C570.0 271.0 563.3 278.7 560.0 282.0" stroke-dasharray="6 5"/>
  <path d="M657.0 194.0 C656.3 194.3 660.8 191.2 653.0 196.0 C645.2 200.8 622.2 213.8 610.0 223.0 C597.8 232.2 588.3 243.2 580.0 251.0 C571.7 258.8 563.3 266.8 560.0 270.0"/>
  <path d="M626.0 194.0 C625.5 194.3 628.2 192.5 623.0 196.0 C617.8 199.5 602.2 209.7 595.0 215.0 C587.8 220.3 584.2 224.2 580.0 228.0 C575.8 231.8 571.7 236.3 570.0 238.0"/>
  <path d="M616.0 194.0 C615.5 194.3 617.3 193.3 613.0 196.0 C608.7 198.7 595.5 206.0 590.0 210.0 C584.5 214.0 583.3 216.8 580.0 220.0 C576.7 223.2 571.7 227.5 570.0 229.0"/>
  <path d="M600.0 194.0 C599.5 194.3 599.5 194.3 597.0 196.0 C594.5 197.7 587.8 202.0 585.0 204.0 C582.2 206.0 582.5 206.0 580.0 208.0 C577.5 210.0 571.7 214.7 570.0 216.0"/>
  <path d="M1120.0 195.0 C1121.2 195.4 1115.6 193.8 1126.9 197.4 C1138.2 201.0 1167.9 209.0 1188.0 216.3 C1208.1 223.6 1236.4 236.2 1247.6 241.0 C1258.8 245.8 1253.8 244.3 1255.0 245.0"/>
  <path d="M1165.0 195.0 C1166.2 195.4 1165.2 195.1 1172.3 197.4 C1179.4 199.7 1195.2 204.1 1207.8 209.0 C1220.3 213.9 1239.7 223.1 1247.6 226.6 C1255.5 230.1 1253.8 229.4 1255.0 230.0" stroke-dasharray="5 5"/>
  <path d="M1190.0 195.0 C1191.0 195.4 1190.5 195.4 1195.8 197.4 C1201.1 199.4 1213.4 203.7 1222.0 207.0 C1230.6 210.3 1242.1 215.1 1247.6 217.4 C1253.1 219.7 1253.8 220.4 1255.0 221.0"/>
  <path d="M1255.0 584.0 C1253.8 585.2 1262.4 575.7 1248.0 591.0 C1233.6 606.3 1193.7 651.8 1168.4 676.0 C1143.1 700.2 1109.4 725.0 1096.0 736.0 C1082.6 747.0 1089.3 741.0 1088.0 742.0"/>
  <path d="M1255.0 606.0 C1253.8 607.2 1260.5 600.7 1248.0 613.0 C1235.5 625.3 1202.3 659.5 1180.0 680.0 C1157.7 700.5 1126.3 725.7 1114.0 736.0 C1101.7 746.3 1107.3 741.0 1106.0 742.0" stroke-dasharray="5 4"/>
  <path d="M1255.0 615.0 C1253.8 616.2 1258.8 610.3 1248.0 622.0 C1237.2 633.7 1210.2 666.0 1190.0 685.0 C1169.8 704.0 1138.8 726.5 1127.0 736.0 C1115.2 745.5 1120.3 741.0 1119.0 742.0"/>
  <path d="M1255.0 624.0 C1253.8 625.2 1257.5 620.0 1248.0 631.0 C1238.5 642.0 1216.0 672.5 1198.0 690.0 C1180.0 707.5 1151.0 727.3 1140.0 736.0 C1129.0 744.7 1133.3 741.0 1132.0 742.0"/>
  <path d="M1255.0 637.0 C1253.8 638.2 1256.3 634.3 1248.0 644.0 C1239.7 653.7 1220.7 679.7 1205.0 695.0 C1189.3 710.3 1163.8 728.2 1154.0 736.0 C1144.2 743.8 1147.3 741.0 1146.0 742.0"/>
  <path d="M1255.0 665.0 C1253.8 666.2 1254.7 665.3 1248.0 672.0 C1241.3 678.7 1226.8 694.3 1215.0 705.0 C1203.2 715.7 1185.0 729.8 1177.5 736.0 C1170.0 742.2 1171.2 741.0 1170.0 742.0"/>

  <path d="M470 196 C420 250 380 330 360 420 C345 500 350 620 380 736"/>
  <path d="M500 196 C450 250 410 330 390 420 C375 500 380 620 410 736" stroke-dasharray="20 15"/>
  <path d="M530 196 C480 250 440 330 420 420 C405 500 410 620 440 736"/>
  <path d="M560 196 C510 250 470 330 450 420 C435 500 440 620 470 736"/>
  <path d="M590 196 C540 250 500 330 480 420 C465 500 470 620 500 736"/>
 </g>
 <rect x="352" y="330" width="289" height="39" fill="#F51D02"/>
 <rect x="352" y="375" width="289" height="207" fill="#F51D02"/>
 <path d="M480 582 L496 600 L512 582z" fill="#F51D02"/>
</svg>
<div class="a" style="left:43px;top:527px;width:47px;height:1px;background:#fff"></div>

<!-- status -->
<div id="status" class="a"></div>

<div class="a" style="left:960px;top:755px;width:38px;height:20px;background:#C6C6C6"></div>
<svg class="a" style="left:0;top:755px" width="1313" height="20" viewBox="0 755 1313 20">
 <g fill="none" stroke="#6a6a6a" stroke-width="1">
  <!-- spellcheck book -->
  <path d="M81.5 759.5 h6 v12 h-6z M87.5 759.5 h4 l-1 0"/>
  <path d="M88 770 l1.5 2 l1.5 -2"/>
  <path d="M89.5 765 l2 2 l3.5 -5"/>
  <!-- notes -->
  <line x1="895" y1="765.5" x2="906" y2="765.5"/><line x1="895" y1="768.5" x2="906" y2="768.5"/><line x1="895" y1="771.5" x2="903" y2="771.5"/>
  <!-- normal view -->
  <rect x="972.5" y="758.5" width="13" height="12"/>
  <line x1="975.5" y1="759" x2="975.5" y2="770"/><line x1="976" y1="767.5" x2="985" y2="767.5"/>
  <rect x="978.5" y="761.5" width="4" height="2"/>
  <!-- slide sorter -->
  <rect x="1010.5" y="759.5" width="4" height="4"/><rect x="1018.5" y="759.5" width="4" height="4"/>
  <rect x="1010.5" y="766.5" width="4" height="4"/><rect x="1018.5" y="766.5" width="4" height="4"/>
  <!-- reading -->
  <path d="M1047.5 759.5 h6 l0.5 1 l0.5 -1 h6 v11 h-6 l-0.5 1 l-0.5 -1 h-6z"/>
  <line x1="1054" y1="760" x2="1054" y2="771"/>
  <g stroke="#8a8a8a"><line x1="1049" y1="762.5" x2="1052.5" y2="762.5"/><line x1="1049" y1="765" x2="1052.5" y2="765"/><line x1="1049" y1="767.5" x2="1052.5" y2="767.5"/><line x1="1055.5" y1="762.5" x2="1059" y2="762.5"/><line x1="1055.5" y1="765" x2="1059" y2="765"/><line x1="1055.5" y1="767.5" x2="1059" y2="767.5"/></g>
  <!-- slideshow -->
  <line x1="1085" y1="759.5" x2="1099" y2="759.5"/>
  <path d="M1086.5 760 v5.5 h11 v-5.5"/>
  <rect x="1089.5" y="761.5" width="5" height="2"/>
  <line x1="1092" y1="766" x2="1092" y2="771"/><line x1="1089" y1="771.5" x2="1095" y2="771.5"/>
  <!-- zoom -->
  <line x1="1127" y1="765.5" x2="1227" y2="765.5" stroke="#9a9a9a"/>
  <line x1="1177.5" y1="763" x2="1177.5" y2="768" stroke="#9a9a9a"/>
  <!-- fit -->
  <rect x="1284.5" y="759.5" width="12" height="12"/>
 </g>
 <path d="M900.5 759 l3 3 h-6z" fill="#6a6a6a"/>
 <rect x="1116" y="765" width="7" height="2" fill="#555"/>
 <rect x="1231" y="765" width="7" height="2" fill="#555"/><rect x="1233.5" y="762.5" width="2" height="7" fill="#555"/>
 <rect x="1162" y="760" width="5" height="11" fill="#6a6a6a"/>
 <g stroke="#6a6a6a" stroke-width="1" fill="none">
  <path d="M1290.5 761 v3 M1290.5 767 v3 M1286 765.5 h3 M1292 765.5 h3"/>
 </g>
</svg>
<span class="t st" style="left:6px">Slide 2 of 4</span>
<span class="t st" style="left:112px">English (Philippines)</span>
<span class="t st" style="left:911px">Notes</span>
<span class="t st" style="left:1249px;font-size:10.8px">76%</span>
<!-- properties window -->
<div class="a" style="left:411px;top:65px;width:164px;height:720px;background:#F0F0F0;box-shadow:0 0 16px 3px rgba(0,0,0,0.24)"></div>
<div class="a" style="left:411px;top:65px;width:164px;height:31px;background:#744DA9"></div>
<span class="t" style="left:419px;top:75px;font-size:11.5px;color:#fff">Properties</span>
<div class="a" style="left:555px;top:73px;width:19px;height:19px;background:#C75050"></div>
<svg class="a" style="left:555px;top:73px" width="19" height="19"><path d="M6.5 7 L12 12.5 M12 7 L6.5 12.5" stroke="#fff" stroke-width="1.6"/></svg>
<div class="a" style="left:411px;top:143px;width:1px;height:640px;background:#fff"></div>
<div class="a" style="left:574px;top:143px;width:1px;height:640px;background:#6E6E6E"></div>
<!-- combo -->
<div class="a" style="left:414px;top:102px;width:157px;height:17px;background:#fff;border-top:2px solid #6E6E6E;border-left:2px solid #6E6E6E;border-bottom:1px solid #E3E3E3;border-right:1px solid #E3E3E3"></div>
<span class="t" style="left:418px;top:107px;font-size:11px;color:#000;letter-spacing:0.3px"><b>TextBox1</b>&nbsp; TextBox</span>
<div class="a" style="left:554px;top:104px;width:17px;height:15px;background:#F0F0F0;border-right:2px solid #6E6E6E;border-bottom:2px solid #6E6E6E;border-top:1px solid #fff;border-left:1px solid #fff"></div>
<svg class="a" style="left:554px;top:104px" width="17" height="15"><path d="M5 6 L11 6 L8 9.5z" fill="#000"/></svg>
<!-- tabs -->
<div class="a" style="left:415px;top:124px;width:65px;height:21px;border-top:1px solid #fff;border-left:1px solid #fff;border-right:2px solid #6E6E6E"></div>
<span class="t" style="left:422px;top:128px;font-size:10.6px;color:#000">Alphabetic</span>
<div class="a" style="left:480px;top:126px;width:68px;height:17px;border-top:1px solid #fff;border-right:2px solid #6E6E6E"></div>
<span class="t" style="left:483px;top:131px;font-size:10.8px;color:#000">Categorized</span>
<!-- grid frame -->
<div class="a" style="left:418px;top:145px;width:153px;height:640px;background:#fff;border-top:1px solid #6A6A6A;border-left:1px solid #6A6A6A"></div>
<div class="a" style="left:419px;top:146px;width:151px;height:640px;border-top:1px solid #A0A0A0;border-left:1px solid #A0A0A0"></div>
<div class="a" style="left:420px;top:147px;width:150px;height:640px;border-top:1px solid #6A6A6A;border-left:1px solid #6A6A6A;border-right:2px solid #fff"></div>
<div class="a" style="left:570px;top:145px;width:1px;height:640px;background:#6A6A6A"></div>
<div class="a" style="left:421px;top:163px;width:147px;height:1px;background:#C8C8C8"></div>
<div class="a" style="left:421px;top:179px;width:147px;height:1px;background:#C8C8C8"></div>
<div class="a" style="left:421px;top:195px;width:147px;height:1px;background:#C8C8C8"></div>
<div class="a" style="left:421px;top:211px;width:147px;height:1px;background:#C8C8C8"></div>
<div class="a" style="left:421px;top:227px;width:147px;height:1px;background:#C8C8C8"></div>
<div class="a" style="left:421px;top:243px;width:147px;height:1px;background:#C8C8C8"></div>
<div class="a" style="left:421px;top:259px;width:147px;height:1px;background:#C8C8C8"></div>
<div class="a" style="left:421px;top:275px;width:147px;height:1px;background:#C8C8C8"></div>
<div class="a" style="left:421px;top:291px;width:147px;height:1px;background:#C8C8C8"></div>
<div class="a" style="left:421px;top:307px;width:147px;height:1px;background:#C8C8C8"></div>
<div class="a" style="left:421px;top:323px;width:147px;height:1px;background:#C8C8C8"></div>
<div class="a" style="left:421px;top:339px;width:147px;height:1px;background:#C8C8C8"></div>
<div class="a" style="left:421px;top:355px;width:147px;height:1px;background:#C8C8C8"></div>
<div class="a" style="left:421px;top:371px;width:147px;height:1px;background:#C8C8C8"></div>
<div class="a" style="left:421px;top:387px;width:147px;height:1px;background:#C8C8C8"></div>
<div class="a" style="left:421px;top:403px;width:147px;height:1px;background:#C8C8C8"></div>
<div class="a" style="left:421px;top:419px;width:147px;height:1px;background:#C8C8C8"></div>
<div class="a" style="left:421px;top:435px;width:147px;height:1px;background:#C8C8C8"></div>
<div class="a" style="left:421px;top:451px;width:147px;height:1px;background:#C8C8C8"></div>
<div class="a" style="left:421px;top:467px;width:147px;height:1px;background:#C8C8C8"></div>
<div class="a" style="left:421px;top:483px;width:147px;height:1px;background:#C8C8C8"></div>
<div class="a" style="left:421px;top:499px;width:147px;height:1px;background:#C8C8C8"></div>
<div class="a" style="left:421px;top:515px;width:147px;height:1px;background:#C8C8C8"></div>
<div class="a" style="left:421px;top:531px;width:147px;height:1px;background:#C8C8C8"></div>
<div class="a" style="left:421px;top:547px;width:147px;height:1px;background:#C8C8C8"></div>
<div class="a" style="left:421px;top:563px;width:147px;height:1px;background:#C8C8C8"></div>
<div class="a" style="left:421px;top:579px;width:147px;height:1px;background:#C8C8C8"></div>
<div class="a" style="left:421px;top:595px;width:147px;height:1px;background:#C8C8C8"></div>
<div class="a" style="left:421px;top:611px;width:147px;height:1px;background:#C8C8C8"></div>
<div class="a" style="left:421px;top:627px;width:147px;height:1px;background:#C8C8C8"></div>
<div class="a" style="left:421px;top:643px;width:147px;height:1px;background:#C8C8C8"></div>
<div class="a" style="left:421px;top:659px;width:147px;height:1px;background:#C8C8C8"></div>
<div class="a" style="left:421px;top:675px;width:147px;height:1px;background:#C8C8C8"></div>
<div class="a" style="left:421px;top:691px;width:147px;height:1px;background:#C8C8C8"></div>
<div class="a" style="left:421px;top:707px;width:147px;height:1px;background:#C8C8C8"></div>
<div class="a" style="left:421px;top:723px;width:147px;height:1px;background:#C8C8C8"></div>
<div class="a" style="left:497px;top:148px;width:1px;height:575px;background:#C8C8C8"></div>
<div class="a" style="left:568px;top:148px;width:1px;height:640px;background:#D0D0D0"></div>
<div class="pk" style="top:148px;">(Name)</div>
<div class="pv" style="top:148px">TextBox1</div>
<div class="pk" style="top:164px;">AutoSize</div>
<div class="pv" style="top:164px">False</div>
<div class="pk" style="top:180px;">AutoTab</div>
<div class="pv" style="top:180px">False</div>
<div class="pk" style="top:196px;">AutoWordSelect</div>
<div class="pv" style="top:196px">True</div>
<div class="pk" style="top:212px;">BackColor</div>
<div class="pv" style="top:212px"><i class="sw" style="background:#FFFFFF"></i><span style="position:absolute;left:18px;top:0">&amp;H80000005</span></div>
<div class="pk" style="top:228px;">BackStyle</div>
<div class="pv" style="top:228px">1 - fmBackStyleOpaque</div>
<div class="pk" style="top:244px;">BorderColor</div>
<div class="pv" style="top:244px"><i class="sw" style="background:#6B6B6B"></i><span style="position:absolute;left:18px;top:0">&amp;H80000006</span></div>
<div class="pk" style="top:260px;">BorderStyle</div>
<div class="pv" style="top:260px">0 - fmBorderStyleNone</div>
<div class="pk" style="top:276px;">DragBehavior</div>
<div class="pv" style="top:276px">0 - fmDragBehaviorDisabled</div>
<div class="pk" style="top:292px;">Enabled</div>
<div class="pv" style="top:292px">True</div>
<div class="pk" style="top:308px;">EnterFieldBehavior</div>
<div class="pv" style="top:308px">0 - fmEnterFieldBehaviorSelectAll</div>
<div class="pk" style="top:324px;">EnterKeyBehavior</div>
<div class="pv" style="top:324px">True</div>
<div class="pk" style="top:340px;">Font</div>
<div class="pv" style="top:340px">Arial</div>
<div class="pk" style="top:356px;">ForeColor</div>
<div class="pv" style="top:356px"><i class="sw" style="background:#000000"></i><span style="position:absolute;left:18px;top:0">&amp;H80000008</span></div>
<div class="pk" style="top:372px;">Height</div>
<div class="pv" style="top:372px">289</div>
<div class="pk" style="top:388px;">HideSelection</div>
<div class="pv" style="top:388px">True</div>
<div class="pk" style="top:404px;">IMEMode</div>
<div class="pv" style="top:404px">0 - fmIMEModeNoControl</div>
<div class="pk" style="top:420px;">IntegralHeight</div>
<div class="pv" style="top:420px">True</div>
<div class="pk" style="top:436px;">Left</div>
<div class="pv" style="top:436px">456</div>
<div class="pk" style="top:452px;">Locked</div>
<div class="pv" style="top:452px">False</div>
<div class="pk" style="top:468px;">MaxLength</div>
<div class="pv" style="top:468px">0</div>
<div class="pk" style="top:484px;">MouseIcon</div>
<div class="pv" style="top:484px">(None)</div>
<div class="pk" style="top:500px;">MousePointer</div>
<div class="pv" style="top:500px">0 - fmMousePointerDefault</div>
<div class="pk" style="top:516px;background:#F0F0F0;">MultiLine</div>
<div class="pv" style="top:516px"><span style="position:absolute;left:2px;top:1px;height:13px;width:23px;background:#0078D7"></span><span style="position:absolute;left:2px;top:0;color:#fff">True</span></div>
<div class="pk" style="top:532px;">PasswordChar</div>
<div class="pv" style="top:532px"></div>
<div class="pk" style="top:548px;">ScrollBars</div>
<div class="pv" style="top:548px">0 - fmScrollBarsNone</div>
<div class="pk" style="top:564px;">SelectionMargin</div>
<div class="pv" style="top:564px">True</div>
<div class="pk" style="top:580px;">SpecialEffect</div>
<div class="pv" style="top:580px">2 - fmSpecialEffectSunken</div>
<div class="pk" style="top:596px;">TabKeyBehavior</div>
<div class="pv" style="top:596px">False</div>
<div class="pk" style="top:612px;">Text</div>
<div class="pv" style="top:612px"></div>
<div class="pk" style="top:628px;">TextAlign</div>
<div class="pv" style="top:628px">1 - fmTextAlignLeft</div>
<div class="pk" style="top:644px;">Top</div>
<div class="pv" style="top:644px">153</div>
<div class="pk" style="top:660px;">Value</div>
<div class="pv" style="top:660px"></div>
<div class="pk" style="top:676px;">Visible</div>
<div class="pv" style="top:676px">True</div>
<div class="pk" style="top:692px;">Width</div>
<div class="pv" style="top:692px">381</div>
<div class="pk" style="top:708px;">WordWrap</div>
<div class="pv" style="top:708px">True</div>
<!-- dropdown -->
<div class="a" style="left:552px;top:516px;width:16px;height:15px;background:#F0F0F0;border-right:1px solid #A0A0A0"></div>
<svg class="a" style="left:552px;top:516px" width="16" height="15"><path d="M4 5.5 L12 5.5 L8 10z" fill="#000"/></svg>
<div class="a" style="left:497px;top:531px;width:72px;height:28px;background:#fff;border:1px solid #646464"></div>
<div class="a" style="left:498px;top:532px;width:70px;height:13px;background:#0078D7"></div>
<span class="t" style="left:500px;top:533px;font-size:10.5px;color:#fff">True</span>
<span class="t" style="left:499px;top:546px;font-size:10.5px;color:#000">False</span>
<!-- cursor -->
<svg class="a" style="left:554px;top:521px" width="14" height="20"><path d="M0.5 0.5 L0.5 15.5 L4 12 L6.5 18 L9 17 L6.5 11 L11.5 11 Z" fill="#fff" stroke="#000" stroke-width="1" stroke-linejoin="round"/></svg>

</body></html>
